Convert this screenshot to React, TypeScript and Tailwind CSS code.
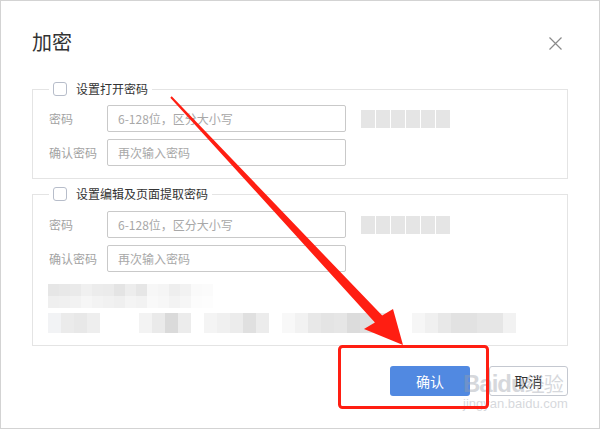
import React from "react";

const font = "font-['Noto_Sans_CJK_SC','Noto_Sans',sans-serif]";

// mosaic cells standing in for the pixelated area of the screenshot
const mosaicTop = [
  ["#e6e6e6", "#e8e8e8", "#eaeaea", "#f0f0f0", "#ececec", "#ebebeb", "#e4e4e4", "#ededed", "#e6e6e6", "#f7f7f7", "#f5f5f5", "#eeeeee", "#f2f2f2", "#fafafa", "#fbfbfb"],
  ["#efefef", "#f0f0f0", "#f2f2f2", "#f6f6f6", "#f3f3f3", "#f1f1f1", "#efefef", "#f4f4f4", "#f2f2f2", "#f9f9f9", "#f7f7f7", "#f3f3f3", "#f6f6f6", "#fcfcfc", "#fdfdfd"],
];
const mosaicBottom = [
  "#f2f3f5", "#ebebeb", "#e8e8e8", "#eeeeee", "#ffffff", "#ffffff", "#ffffff", "#f3f3f3", "#eaeaea", "#dadada", "#ececec", "#ffffff",
  "#f4f4f4", "#f0f0f0", "#ececec", "#e0e0e0", "#ececec", "#ffffff", "#f8f8f8", "#f2f2f2", "#e8e8e8", "#e4e4e4", "#e6e6e6", "#dcdcdc",
  "#e0e0e0", "#e6e6e6", "#ffffff", "#ffffff", "#f6f6f6", "#f0f0f0", "#e8e8e8", "#e2e2e2", "#e2e2e2", "#e6e6e6", "#e6e6e6", "#f2f2f2",
];

function Legend({ text }: { text: string }) {
  return (
    <legend className="ml-[16px] px-[4px] flex items-center h-[20px]">
      <span className="w-[14px] h-[14px] rounded-[3px] border border-[#b7bdca] bg-white" />
      <span className="ml-[9px] text-[12px] leading-[20px] text-[#333]">{text}</span>
    </legend>
  );
}

function Row({ label, placeholder, hint }: { label: string; placeholder: string; hint?: boolean }) {
  return (
    <div className="flex items-center h-[27px]">
      <span className="w-[58px] text-[12px] text-[#a3a3a3]">{label}</span>
      <div className="w-[239px] h-[27px] border border-[#c9c9c9] rounded-[2px] flex items-center pl-[10px] text-[12px] text-[#a8a8a8]">
        {placeholder}
      </div>
      {hint && (
        <div className="ml-[15px] flex gap-[1px]">
          {[0, 1, 2, 3, 4, 5].map((i) => (
            <span key={i} className="w-[14px] h-[18px] bg-[#e5e5e5]" />
          ))}
        </div>
      )}
    </div>
  );
}

export default function App() {
  return (
    <div className={`relative w-[600px] h-[429px] bg-white border border-[#d3d3d3] overflow-hidden ${font}`}>
      {/* 标题栏 */}
      <div className="flex items-center justify-between pl-[31px] pr-[37px] pt-[27px]">
        <span className="text-[20px] leading-[28px] text-[#333]">加密</span>
        <svg width="13" height="13" viewBox="0 0 13 13" className="mt-[2px]">
          <path d="M0.5 0.5 L12.5 12.5 M12.5 0.5 L0.5 12.5" stroke="#8a8a8a" strokeWidth="1.2" />
        </svg>
      </div>

      {/* 打开密码 */}
      <fieldset className="mx-[31px] mt-[23px] border border-[#e4e4e4] pb-[12px]">
        <Legend text="设置打开密码" />
        <div className="flex flex-col gap-[7px] pl-[16px] pt-[6px]">
          <Row label="密码" placeholder="6-128位，区分大小写" hint />
          <Row label="确认密码" placeholder="再次输入密码" />
        </div>
      </fieldset>

      {/* 编辑及页面提取密码 */}
      <fieldset className="mx-[31px] mt-[5px] border border-[#e4e4e4] pb-[12px]">
        <Legend text="设置编辑及页面提取密码" />
        <div className="flex flex-col gap-[7px] pl-[16px] pt-[7px]">
          <Row label="密码" placeholder="6-128位，区分大小写" hint />
          <Row label="确认密码" placeholder="再次输入密码" />
        </div>
        <div className="pl-[15px] mt-[12px] flex flex-col">
          {mosaicTop.map((row, r) => (
            <div key={r} className="flex h-[12px]">
              {row.map((c, i) => (
                <span key={i} className="w-[11px] h-full" style={{ background: c }} />
              ))}
            </div>
          ))}
          <div className="flex h-[20px] mt-[5px]">
            {mosaicBottom.map((c, i) => (
              <span key={i} className="w-[13px] h-full" style={{ background: c }} />
            ))}
          </div>
        </div>
      </fieldset>

      {/* 按钮 */}
      <div className="flex justify-end gap-[19px] mr-[31px] mt-[20px]">
        <button className="w-[80px] h-[30px] rounded-[3px] bg-[#5189e1] text-white text-[14px]">确认</button>
        <button className="w-[79px] h-[30px] rounded-[3px] border border-[#c4c8d0] bg-white text-[#333] text-[14px]">取消</button>
      </div>

      {/* 水印 */}
      <div className="absolute left-[462px] top-[370px] pointer-events-none flex flex-col items-start opacity-40 text-[#9aa0aa]">
        <span className="font-['Liberation_Sans',sans-serif] text-[24px] font-bold leading-[26px] tracking-[-1px]">Baidu<span className={`${font} text-[20px] font-normal`}>经验</span></span>
        <span className="font-['Liberation_Sans',sans-serif] text-[13px] leading-[14px]">jingyan.baidu.com</span>
      </div>

      {/* 红色标注 */}
      <svg className="absolute left-0 top-0 pointer-events-none" width="600" height="429" viewBox="0 0 600 429">
        <rect x="338.5" y="345.5" width="148" height="61" rx="3" fill="none" stroke="#ff1e12" strokeWidth="3" />
        <polygon
          points="169.3,96.7 170.7,95.3 381.2,314.6 392,308 402,344 363,328 373.9,321.4"
          fill="#ff1e12"
        />
      </svg>
    </div>
  );
}
